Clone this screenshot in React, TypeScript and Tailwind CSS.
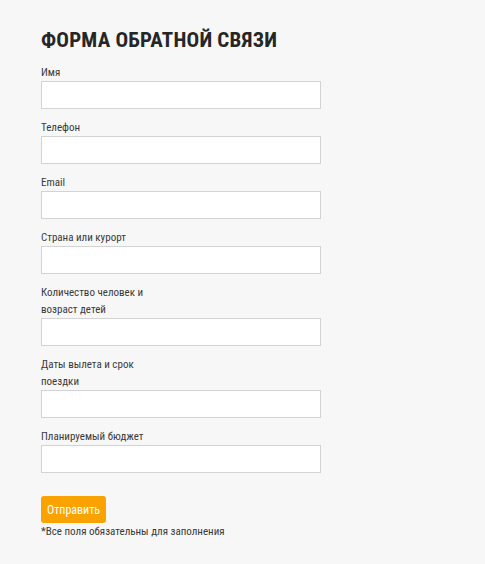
const fields: {label: React.ReactNode; name: string}[] = [
    {label: 'Имя', name: 'name'},
    {label: 'Телефон', name: 'phone'},
    {label: 'Email', name: 'email'},
    {label: 'Страна или курорт', name: 'country'},
    {label: <>Количество человек и<br/>возраст детей</>, name: 'people'},
    {label: <>Даты вылета и срок<br/>поездки</>, name: 'dates'},
    {label: 'Планируемый бюджет', name: 'budget'},
];

export default function App() {
    return (
        <div className="min-h-[564px] w-full bg-[#f7f7f7] text-[#3a3a3a] font-['Roboto',sans-serif] font-stretch-condensed">
            <div className="pl-[41px] pt-[28px]">
                <h2 className="text-[21px] font-bold leading-[24px] tracking-[0.2px] text-[#262626]">ФОРМА ОБРАТНОЙ СВЯЗИ</h2>
                <form className="mt-[12px]" onSubmit={e => e.preventDefault()}>
                    {fields.map(field => (
                        <div key={field.name} className="mb-[10px]">
                            <label htmlFor={field.name} className="block text-[11px] leading-[17px]">{field.label}</label>
                            <input id={field.name} name={field.name} type="text" className="block h-[28px] w-[280px] border border-[#d3d3d3] bg-white px-2 text-[12px] outline-none"/>
                        </div>
                    ))}
                    <button type="submit" className="mt-[23px] block h-[27px] w-[65px] rounded-[3px] bg-[#f9a200] text-[12px] text-white">Отправить</button>
                    <p className="mt-[1px] text-[11px] leading-[16px]">*Все поля обязательны для заполнения</p>
                </form>
            </div>
        </div>
    );
}
